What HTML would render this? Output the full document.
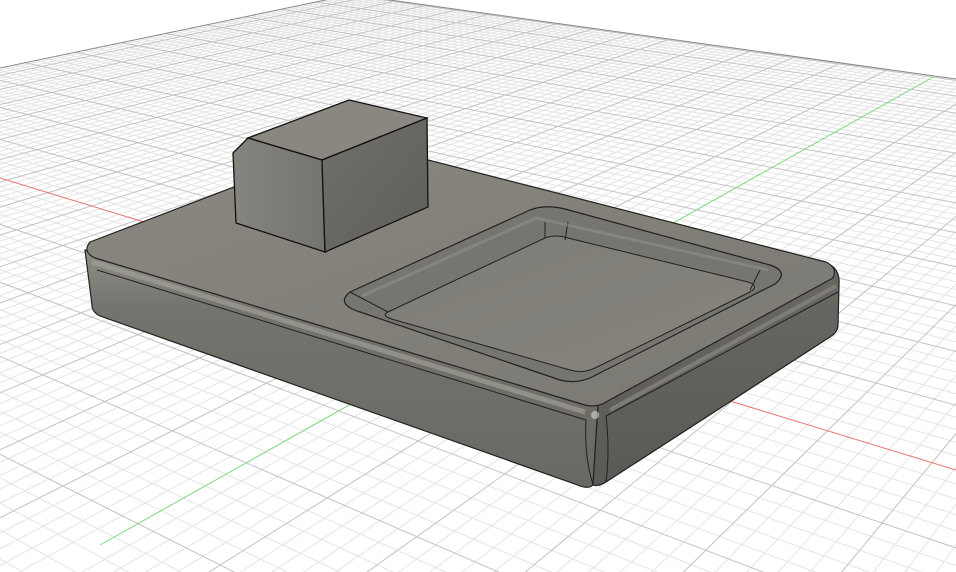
<!DOCTYPE html>
<html><head><meta charset="utf-8"><style>
html,body{margin:0;padding:0;background:#fff;width:956px;height:572px;overflow:hidden}
svg{display:block;position:absolute;left:0;top:0}
</style></head><body>
<svg id="s" width="956" height="572" viewBox="0 0 956 572" xmlns="http://www.w3.org/2000/svg">
<defs>
<clipPath id="cp"><rect x="0" y="0" width="956" height="572"/></clipPath>
<linearGradient id="top" x1="0" y1="0" x2="1" y2="1">
<stop offset="0" stop-color="#8a8880"/><stop offset="1" stop-color="#7a7872"/>
</linearGradient>
<linearGradient id="lf" x1="0" y1="0" x2="0" y2="1">
<stop offset="0" stop-color="#8f8d86"/><stop offset="0.25" stop-color="#75736d"/><stop offset="1" stop-color="#6a6863"/>
</linearGradient>
<linearGradient id="rf" x1="0" y1="0" x2="0" y2="1">
<stop offset="0" stop-color="#6a6863"/><stop offset="1" stop-color="#5a5955"/>
</linearGradient>
<linearGradient id="bf" x1="0" y1="0" x2="1" y2="0">
<stop offset="0" stop-color="#85847e"/><stop offset="1" stop-color="#75746f"/>
</linearGradient>
<linearGradient id="br" x1="0" y1="0" x2="1" y2="1">
<stop offset="0" stop-color="#706f6a"/><stop offset="1" stop-color="#5f5e5a"/>
</linearGradient>
<linearGradient id="fl" x1="0" y1="0" x2="1" y2="1">
<stop offset="0" stop-color="#7e7c76"/><stop offset="1" stop-color="#86847d"/>
</linearGradient>
</defs>
<g id="grid" clip-path="url(#cp)"></g>
<g clip-path="url(#cp)">
<line x1="0" y1="178" x2="956" y2="470" stroke="#e57373" stroke-width="1"/>
<line x1="100" y1="545" x2="935" y2="76" stroke="#7fd67f" stroke-width="1"/>
</g>

<path d="M85,250 L598,405 L593,485 Q588,490 575,484 L100,316 Q92,312 92,305 Z" fill="url(#lf)" stroke="#222" stroke-width="1.2"/>
<path d="M598,405 L832,266 Q840,272 839,285 L838,325 Q838,332 830,337 L606,482 Q598,487 593,485 Z" fill="url(#rf)" stroke="#222" stroke-width="1.2"/>
<path d="M90,242 L354,141 L826,262 Q838,268 833,278 L606,402 Q596,408 585,405 L95,258 Q82,252 90,242 Z" fill="url(#top)" stroke="#222" stroke-width="1.2"/>
<path d="M92,262 L585,412" stroke="#a09e97" stroke-width="5" fill="none" opacity="0.7"/>
<path d="M97,270 L586,420" stroke="#222" stroke-width="1" fill="none"/>
<path d="M610,410 L836,286" stroke="#8a8882" stroke-width="4" fill="none" opacity="0.7"/>
<path d="M606,416 L838,292" stroke="#222" stroke-width="1" fill="none"/>
<path d="M586,420 Q584,455 593,485" stroke="#222" stroke-width="1" fill="none"/>
<path d="M606,416 Q610,450 606,482" stroke="#222" stroke-width="1" fill="none"/>
<circle cx="595" cy="415" r="4" fill="#c8c6c0" opacity="0.7"/>
<path d="M350,292 L530,210 Q545,204 565,209 L770,265 Q790,272 775,284 L590,378 Q575,384 560,380 L360,312 Q335,304 350,292 Z" fill="#77756f" stroke="#222" stroke-width="1.2"/>
<path d="M388,312 L545,238 Q555,234 568,238 L748,282 Q760,286 750,292 L595,368 Q583,374 570,370 L395,320 Q380,316 388,312 Z" fill="url(#fl)" stroke="#222" stroke-width="1"/>
<path d="M350,292 L388,312 M545,222 L545,238 M568,222 L565,240 M760,270 L750,290" stroke="#222" stroke-width="1" fill="none"/>
<path d="M362,296 L536,218 L768,270" stroke="#908e87" stroke-width="3" fill="none" opacity="0.6"/>
<path d="M248,138 L349,100 L427,118 L322,160 Z" fill="#898780" stroke="#111" stroke-width="1.3"/>
<path d="M233,153 L248,138 L322,160 L325,252 L236,223 Z" fill="url(#bf)" stroke="#111" stroke-width="1.3"/>
<path d="M322,160 L427,118 L428,207 L325,252 Z" fill="url(#br)" stroke="#111" stroke-width="1.3"/>
</svg>
<script>
(function(){
var O=[489,327],Vr=[-1401,-250],Vg=[1521,-250],a=0.0076,b=0.0127;
function P(u,v){var w=a*u+b*v+1;return [(a*u*Vr[0]+b*v*Vg[0]+O[0])/w,(a*u*Vr[1]+b*v*Vg[1]+O[1])/w,w];}
function yAtX(p,q,x){return p[1]+(q[1]-p[1])*(x-p[0])/(q[0]-p[0]);}
var lo=0,hi=300;for(var i=0;i<40;i++){var m=(lo+hi)/2;var y=yAtX(P(m,0),P(m,10),0);if(y>68)lo=m;else hi=m;}var U=lo;
lo=0;hi=300;for(var i=0;i<40;i++){var m=(lo+hi)/2;var y=yAtX(P(0,m),P(10,m),956);if(y>79)lo=m;else hi=m;}var V=lo;
function line(p0,p1,c,wd){return '<line x1="'+p0[0].toFixed(1)+'" y1="'+p0[1].toFixed(1)+'" x2="'+p1[0].toFixed(1)+'" y2="'+p1[1].toFixed(1)+'" stroke="'+c+'" stroke-width="'+wd+'"/>';}
function seg(f,k,lim,c){var pts=[];for(var t=-200;t<=lim;t+=1){var p=f(k,t);if(p[2]>0.05)pts.push(p);}
 var e=f(k,lim);if(e[2]>0.05)pts.push(e);
 if(pts.length<2)return '';
 return line(pts[0],pts[pts.length-1],c,1);}
var minor='',major='';
for(var k=-200;k<=Math.floor(U);k++){if(k==0)continue;var mj=(k%5==0);var l=seg(function(k,t){return P(k,t)},k,V,mj?'#c2c2c2':'#e4e4e4');if(mj)major+=l;else minor+=l;}
for(var k=-200;k<=Math.floor(V);k++){if(k==0)continue;var mj=(k%5==0);var l=seg(function(k,t){return P(t,k)},k,U,mj?'#c2c2c2':'#e4e4e4');if(mj)major+=l;else minor+=l;}
var s=minor+major;
s+=seg(function(k,t){return P(k,t)},U,V,'#888');
s+=seg(function(k,t){return P(t,k)},V,U,'#888');
document.getElementById('grid').innerHTML=s;
})();
</script>
</body></html>
